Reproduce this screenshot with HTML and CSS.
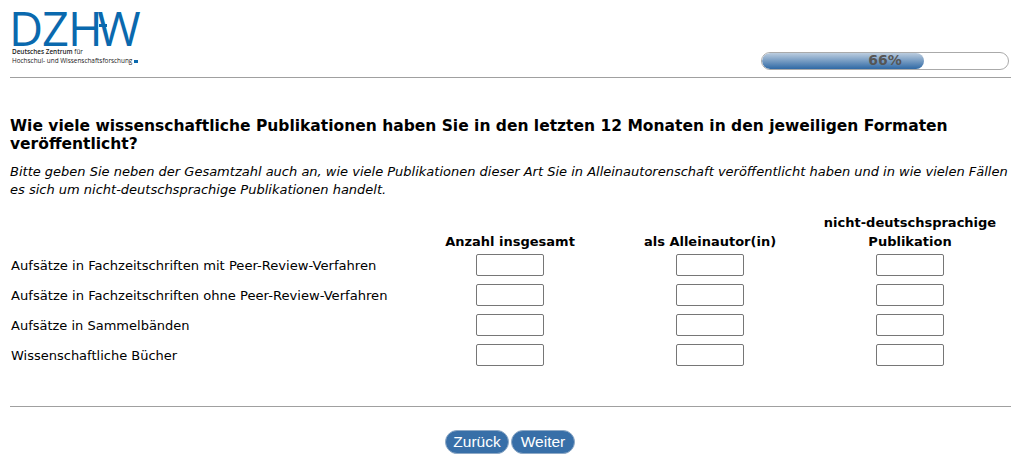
FILE: index.html
```html
<!DOCTYPE html>
<html lang="de">
<head>
<meta charset="utf-8">
<title>DZHW</title>
<link rel="stylesheet" href="styles.css">
</head>
<body>
<header class="header">
  <div class="logo">
    <div class="logo-mark">DZH<span class="logo-w">W</span></div>
    <div class="logo-line logo-first"><b class="logo-strong">Deutsches Zentrum</b> für</div>
    <div class="logo-line">Hochschul- und Wissenschaftsforschung <span class="logo-dot"></span></div>
  </div>
  <div class="progress"><div class="progress-fill"></div><span class="progress-text">66%</span></div>
</header>
<main class="question">
  <h1 class="title">Wie viele wissenschaftliche Publikationen haben Sie in den letzten 12 Monaten in den jeweiligen Formaten veröffentlicht?</h1>
  <p class="hint">Bitte geben Sie neben der Gesamtzahl auch an, wie viele Publikationen dieser Art Sie in Alleinautorenschaft veröffentlicht haben und in wie vielen Fällen es sich um nicht-deutschsprachige Publikationen handelt.</p>
  <table class="matrix">
    <thead>
      <tr><th class="label-col"></th><th>Anzahl insgesamt</th><th>als Alleinautor(in)</th><th>nicht-deutschsprachige Publikation</th></tr>
    </thead>
    <tbody>
      <tr><td class="label">Aufsätze in Fachzeitschriften mit Peer-Review-Verfahren</td><td><input class="field" type="text"></td><td><input class="field" type="text"></td><td><input class="field" type="text"></td></tr>
      <tr><td class="label">Aufsätze in Fachzeitschriften ohne Peer-Review-Verfahren</td><td><input class="field" type="text"></td><td><input class="field" type="text"></td><td><input class="field" type="text"></td></tr>
      <tr><td class="label label-short">Aufsätze in Sammelbänden</td><td><input class="field" type="text"></td><td><input class="field" type="text"></td><td><input class="field" type="text"></td></tr>
      <tr><td class="label label-short">Wissenschaftliche Bücher</td><td><input class="field" type="text"></td><td><input class="field" type="text"></td><td><input class="field" type="text"></td></tr>
    </tbody>
  </table>
</main>
<footer class="footer">
  <button class="btn" type="button">Zurück</button>
  <button class="btn" type="button">Weiter</button>
</footer>
</body>
</html>
```

FILE: styles.css
```css
* { box-sizing: border-box; }
html, body { margin: 0; padding: 0; background: #fff; }
body { font-family: "DejaVu Sans", sans-serif; color: #000; width: 1021px; height: 463px; overflow: hidden; padding: 0 10px; }
.header { height: 78px; border-bottom: 1px solid #a0a0a0; display: flex; justify-content: space-between; align-items: flex-start; }
.logo { padding: 11px 0 0 2px; color: #222; }
.logo-mark { font-family: "Open Sans", sans-serif; font-weight: 500; font-size: 47px; line-height: 35px; color: #0a69ae; letter-spacing: -1px; white-space: nowrap; margin-left: -3px; }
.logo-w { position: relative; margin-left: -4.5px; }
.logo-w::before { content: ""; position: absolute; left: 2px; top: 28px; width: 8px; height: 3px; background: #0a69ae; }
.logo-line { font-family: "Open Sans", sans-serif; font-size: 6.4px; line-height: 9px; white-space: nowrap; }
.logo-strong { font-weight: 600; }
.logo-first { margin-top: 1px; }
.logo-dot { display: inline-block; width: 4px; height: 3px; background: #0a69ae; }
.progress { position: relative; width: 248px; height: 18px; margin: 52px 2px 0 0; border: 1px solid #aaa; border-radius: 9px; overflow: hidden; background: #fff; }
.progress-fill { width: 162px; height: 100%; border-radius: 8px; background: linear-gradient(#bccddf, #2f69a5); }
.progress-text { position: absolute; top: 0; left: 0; width: 100%; text-align: center; font-size: 14px; line-height: 14px; font-weight: bold; color: #555; }
.question { padding-top: 39px; }
.title { margin: 0; font-size: 15.5px; line-height: 18px; font-weight: bold; }
.hint { margin: 10px 0 0; font-size: 13px; line-height: 18px; font-style: italic; }
.matrix { width: 1000px; table-layout: fixed; border-collapse: collapse; margin-top: 14px; }
.matrix th { font-size: 13px; line-height: 19px; font-weight: bold; text-align: center; vertical-align: bottom; padding: 0 10px; }
.matrix .label-col { width: 400px; }
.matrix td { height: 30px; padding: 3px 0 5px; text-align: center; vertical-align: middle; }
.matrix .label { text-align: left; font-size: 13.12px; padding-left: 1px; }
.matrix .label-short { font-size: 13px; }
.field { display: block; margin: 0 auto; width: 68px; height: 22px; border: 1px solid #767676; border-radius: 2px; background: #fff; padding: 0; }
.footer { margin-top: 35px; padding: 23px 1px 0 0; border-top: 1px solid #a0a0a0; display: flex; justify-content: center; gap: 2px; }
.btn { font-family: "Liberation Sans", sans-serif; font-size: 15.5px; height: 24px; width: 64px; padding: 0; line-height: 22px; color: #fff; background: #386fa8; border: 1px solid #8ea9c6; border-radius: 12px; }
```
